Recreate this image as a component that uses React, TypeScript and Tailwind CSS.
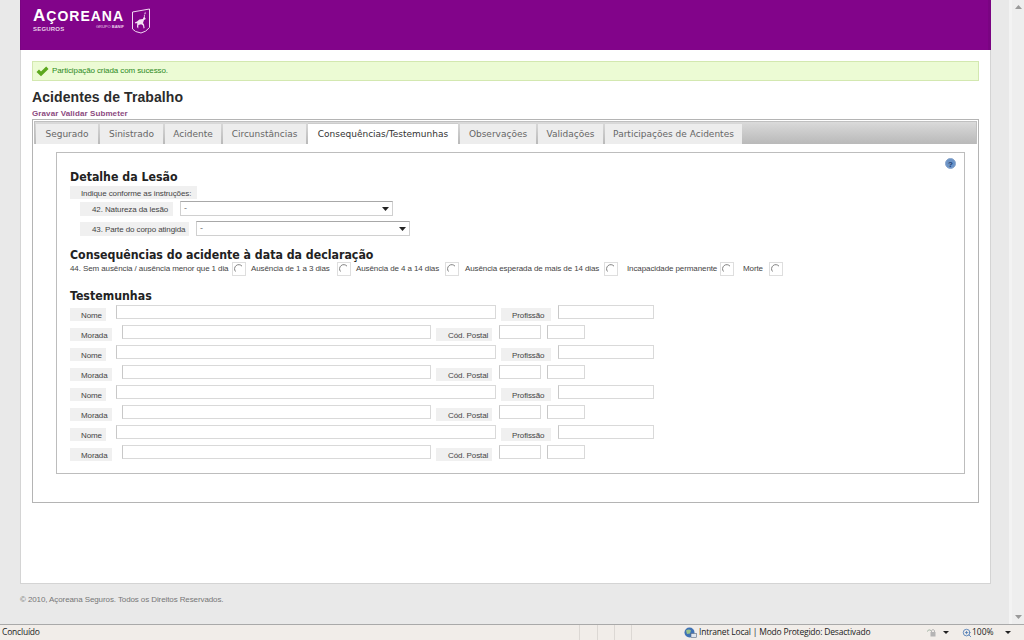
import React from 'react';
import { ZoomIn } from 'lucide-react';

const verdana = 'font-["DejaVu_Sans",sans-serif]';
const headingFont = 'font-["DejaVu_Sans_Condensed","DejaVu_Sans",sans-serif]';
const arial = 'font-["Liberation_Sans",Arial,sans-serif]';
const segoe = 'font-["Open_Sans",sans-serif]';

const tabs = [
    { name: 'Segurado', w: 'w-[62px]' },
    { name: 'Sinistrado', w: 'w-[63px]' },
    { name: 'Acidente', w: 'w-[56px]' },
    { name: 'Circunstâncias', w: 'w-[83px]' },
    { name: 'Consequências/Testemunhas', w: 'w-[150px]', active: true },
    { name: 'Observações', w: 'w-[76px]' },
    { name: 'Validações', w: 'w-[65px]' },
    { name: 'Participações de Acidentes', w: 'w-[137px]' },
];

const Label = ({ children, className }: { children: React.ReactNode; className: string }) => (
    <div className={`h-[13px] bg-[#f0f0f0] text-[8px] tracking-[-0.1px] leading-[15px] text-[#444] whitespace-nowrap shrink-0 ${className}`}>{children}</div>
);

const Input = ({ className }: { className: string }) => (
    <div className={`h-[14px] bg-white border border-[#d9d9d9] border-l-[#c8c8c8] shrink-0 ${className}`} />
);

const Select = ({ className }: { className: string }) => (
    <div className={`h-[15px] bg-white border border-[#d0d0d0] border-t-[#a8a8a8] shrink-0 flex items-center justify-between pl-[3px] pr-[3px] text-[9px] text-[#777] ${className}`}>
        <span>-</span>
        <svg width="7" height="4" viewBox="0 0 7 4"><path d="M0 0h7L3.5 4z" fill="#222" /></svg>
    </div>
);

const Radio = ({ className = '' }: { className?: string }) => (
    <div className={`w-[14px] h-[14px] border border-[#dedede] bg-white flex items-center justify-center shrink-0 ${className}`}>
        <svg width="10" height="10" viewBox="0 0 10 10" fill="none">
            <path d="M1.5 7.5A4 4 0 0 1 8 2.2" stroke="#808080" strokeWidth="1" />
        </svg>
    </div>
);

const Heading = ({ children, className }: { children: React.ReactNode; className: string }) => (
    <h2 className={`${headingFont} font-bold text-[12.25px] leading-[16px] text-[#222] ${className}`}>{children}</h2>
);

const Witness = () => (
    <div>
        <div className="flex items-start h-[20px]">
            <Label className="w-[36px] mt-[3px] pl-[11px]">Nome</Label>
            <Input className="w-[380px] ml-[10px]" />
            <Label className="w-[50px] mt-[3px] ml-[5px] pl-[11px]">Profissão</Label>
            <Input className="w-[96px] ml-[7px]" />
        </div>
        <div className="flex items-start h-[20px]">
            <Label className="w-[42px] mt-[3px] pl-[11px]">Morada</Label>
            <Input className="w-[309px] ml-[10px]" />
            <Label className="w-[56px] mt-[3px] ml-[5px] pl-[12px]">Cód. Postal</Label>
            <Input className="w-[42px] ml-[7px]" />
            <Input className="w-[38px] ml-[6px]" />
        </div>
    </div>
);

const Logo = () => (
    <div className="flex items-start pl-[12px] pt-[7px] text-white">
        <div className="w-[92px] relative h-[26px]">
            <div className={`${arial} font-bold text-[17px] leading-[18px] tracking-[1px] whitespace-nowrap`}>
                A<span className="text-[14px]">ÇOREANA</span>
            </div>
            <div className={`${arial} absolute left-0 top-[18px] text-[6px] leading-[8px] font-bold tracking-[0.2px] text-[#e9cfe9]`}>SEGUROS</div>
            <div className={`${arial} absolute right-[1px] top-[17px] text-[4px] leading-[6px] text-[#e9cfe9] whitespace-nowrap`}>GRUPO <b>BANIF</b></div>
        </div>
        <svg width="20" height="26" viewBox="0 0 20 26" fill="none" className="ml-[6px] mt-[1px]">
            <path d="M1.5 4L18.5 1V19.5Q15 24 10 25Q3.5 24 1.5 21Z" stroke="#f0d8f0" strokeWidth="1" />
            <path d="M14.5 3.5l.3 2-1.6-1 .6 2.2-1 .9.2 1-1.2 2.4-3.4.6L6 13.5l-2.2 1 .8 1 1.6-.6-.2 4 1.2 1.6.2-3.4 2.8-.8 1.8 1.2.6 3 1-.6-.6-3.4-1-1.6 1-3 1.8-1-1.2-2 .4-2.4 1.2-1.4-.6-.2-.8 1z" fill="#f3e2f3" />
        </svg>
    </div>
);

export default function App() {
    return (
        <div className={`${arial} w-[1024px] h-[640px] overflow-hidden flex flex-col bg-[#e9e9e9]`}>
            <div className="flex flex-1 min-h-0">
                <div className="w-[20px] shrink-0" />
                <div className="w-[971px] shrink-0 flex flex-col">
                    <div className="h-[50px] bg-[#82048a] border-l border-r-[3px] border-[#7a0482] shrink-0">
                        <Logo />
                    </div>
                    <div className="h-[534px] bg-white border-r border-b border-l border-[#d4d4d4] px-[11px] pt-[11px] shrink-0">
                        <div className="h-[20px] bg-[#ecfbd4] border border-[#d3e8b0] flex items-center pl-[3px] text-[8px] tracking-[-0.1px] text-[#2d8a1e]">
                            <svg width="13" height="11" viewBox="0 0 13 11" className="mr-[3px]"><path d="M0.5 6L3 3.6 5 5.6 10.2 0.5 12.5 3 5 10.2z" fill="#5ca81e" /></svg>
                            Participação criada com sucesso.
                        </div>
                        <h1 className="mt-[7px] font-bold text-[14px] leading-[18px] tracking-[0.08px] text-[#2b2b2b]">Acidentes de Trabalho</h1>
                        <div className="mt-[3px] text-[8px] leading-[10px] font-bold tracking-[0.1px] text-[#8c4a80]">Gravar Validar Submeter</div>
                        <div className="h-[384px] border border-[#b4b4b4] pt-[1px] px-[1px]">
                            <div className="h-[23px] flex items-end pl-[1px] gap-[2px] border-x border-t border-[#c0c0c0] bg-gradient-to-b from-[#dadada] to-[#b9b9b9]">
                                {tabs.map((t) => (
                                    <div
                                        key={t.name}
                                        className={`${verdana} ${t.w} shrink-0 text-center whitespace-nowrap text-[9px] leading-[20px] ${t.active ? 'h-[21px] bg-white text-[#333] border-t border-[#ccc]' : 'h-[20px] bg-[#ededed] text-[#666]'}`}
                                    >
                                        {t.name}
                                    </div>
                                ))}
                            </div>
                            <div className="relative mt-[8px] ml-[22px] mr-[12px] h-[322px] border border-[#bdbdbd] pl-[13px] pt-[16px]">
                                <svg width="11" height="11" viewBox="0 0 11 11" className="absolute right-[8px] top-[5px]">
                                    <circle cx="5.5" cy="5.5" r="5" fill="#6b93c6" stroke="#8aa6cc" />
                                    <text x="5.5" y="8.5" textAnchor="middle" fontSize="8" fontWeight="bold" fill="#1f3f70" fontFamily="Liberation Sans">?</text>
                                </svg>
                                <Heading className="">Detalhe da Lesão</Heading>
                                <Label className="w-[127px] mt-[1px] pl-[11px]">Indique conforme as instruções:</Label>
                                <div className="flex items-start ml-[10px] mt-[2px] h-[20px]">
                                    <Label className="w-[93px] !h-[14px] mt-[1px] pl-[12px]">42. Natureza da lesão</Label>
                                    <Select className="w-[213px] ml-[7px]" />
                                </div>
                                <div className="flex items-start ml-[10px] h-[20px]">
                                    <Label className="w-[109px] !h-[14px] mt-[1px] pl-[12px]">43. Parte do corpo atingida</Label>
                                    <Select className="w-[214px] ml-[7px]" />
                                </div>
                                <Heading className="mt-[6px]">Consequências do acidente à data da declaração</Heading>
                                <div className="flex items-center h-[14px] -mt-[1px] text-[8px] tracking-[-0.1px] text-[#444] whitespace-nowrap">
                                    <span className="w-[162px]">44. Sem ausência / ausência menor que 1 dia</span>
                                    <Radio />
                                    <span className="w-[86px] pl-[5px]">Ausência de 1 a 3 dias</span>
                                    <Radio className="ml-[5px]" />
                                    <span className="w-[94px] pl-[5px]">Ausência de 4 a 14 dias</span>
                                    <Radio />
                                    <span className="w-[145px] pl-[6px]">Ausência esperada de mais de 14 dias</span>
                                    <Radio />
                                    <span className="w-[102px] pl-[9px]">Incapacidade permanente</span>
                                    <Radio />
                                    <span className="w-[35px] pl-[9px]">Morte</span>
                                    <Radio />
                                </div>
                                <Heading className="mt-[12px]">Testemunhas</Heading>
                                <div className="mt-[1px]">
                                    <Witness />
                                    <Witness />
                                    <Witness />
                                    <Witness />
                                </div>
                            </div>
                        </div>
                    </div>
                    <div className="pt-[10px] text-[8px] tracking-[-0.1px] text-[#777]">© 2010, Açoreana Seguros. Todos os Direitos Reservados.</div>
                </div>
                <div className="flex-1 flex">
                    <div className="flex-1" />
                    <div className="w-[15px] bg-[#eeeeee] border-l-[3px] border-[#f3f3f3] flex flex-col justify-between items-center py-[5px]">
                        <svg width="7" height="4" viewBox="0 0 7 4"><path d="M3.5 0L7 4H0z" fill="#9a9a9a" /></svg>
                        <svg width="7" height="4" viewBox="0 0 7 4"><path d="M0 0h7L3.5 4z" fill="#9a9a9a" /></svg>
                    </div>
                </div>
            </div>
            <div className={`${segoe} h-[16px] shrink-0 bg-[#f1ede9] border-t border-[#a9a9a9] flex items-center text-[8.5px] tracking-[-0.2px] text-[#222] whitespace-nowrap`}>
                <span className="w-[579px] pl-[2px]">Concluído</span>
                <span className="w-[18px] h-full border-l border-[#dcd8d4]" />
                <span className="w-[17px] h-full border-l border-[#dcd8d4]" />
                <span className="w-[17px] h-full border-l border-[#dcd8d4]" />
                <span className="w-[53px] h-full border-l border-[#dcd8d4]" />
                <svg width="13" height="12" viewBox="0 0 13 12" className="mr-[2px] shrink-0">
                    <circle cx="5.5" cy="5.5" r="5" fill="#3f72b5" />
                    <path d="M2 3.5q3-2 5 0l-1 3-3 .5z" fill="#9cc48a" />
                    <rect x="7" y="6.5" width="5.5" height="4" fill="#dfe6ee" stroke="#5a6a80" strokeWidth="0.6" />
                </svg>
                <span className="w-[227px]">Intranet Local | Modo Protegido: Desactivado</span>
                <svg width="11" height="11" viewBox="0 0 11 11" className="shrink-0" fill="none">
                    <path d="M1 4.5q2-3 4-1" stroke="#a8b8a8" />
                    <rect x="4.5" y="5" width="5" height="4.5" fill="#b4b4b4" />
                    <path d="M5.5 5V3.5q1.5-2 3 0V5" stroke="#b4b4b4" />
                </svg>
                <svg width="6" height="3" viewBox="0 0 6 3" className="ml-[6px] mr-[13px] shrink-0"><path d="M0 0h6L3 3z" fill="#222" /></svg>
                <ZoomIn size={10} className="text-[#4a7ab5] shrink-0" />
                <span className="w-[33px] text-[8.5px] tracking-[0px]">100%</span>
                <svg width="6" height="3" viewBox="0 0 6 3" className="shrink-0"><path d="M0 0h6L3 3z" fill="#222" /></svg>
            </div>
        </div>
    );
}
